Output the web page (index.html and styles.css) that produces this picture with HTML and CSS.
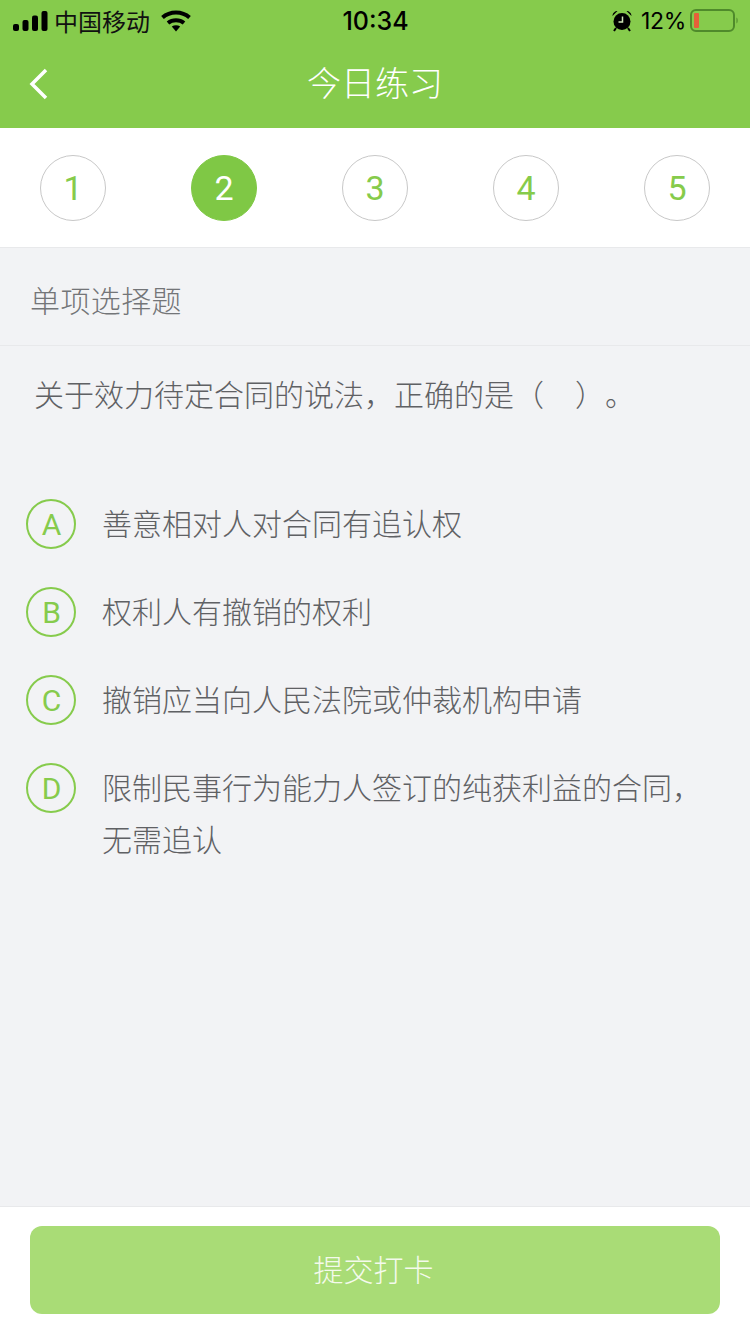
FILE: index.html
```html
<!DOCTYPE html>
<html lang="zh-CN">
<head>
<meta charset="utf-8">
<title>今日练习</title>
<link rel="stylesheet" href="styles.css">
</head>
<body>
<div class="page">
  <header class="header">
    <div class="status">
      <div class="status-left">
        <svg class="signal" width="36" height="20" viewBox="0 0 36 20"><rect x="0" y="13" width="6" height="7" rx="2"/><rect x="9.500" y="9" width="6" height="11" rx="2"/><rect x="19" y="4.500" width="6" height="15.500" rx="2"/><rect x="28.500" y="0" width="6" height="20" rx="2"/></svg>
        <span class="carrier">中国移动</span>
        <svg class="wifi" width="30" height="22" viewBox="0 0 30 22"><path d="M1.500 7.500C9 .8 21 .8 28.500 7.500" fill="none" stroke="#000" stroke-width="4"/><path d="M7 13C11.500 9.300 18.500 9.300 23 13" fill="none" stroke="#000" stroke-width="4"/><path d="M10.800 16.500C13.300 14.800 16.700 14.800 19.200 16.500L15 21.500Z"/></svg>
      </div>
      <div class="clock">10:34</div>
      <div class="status-right">
        <svg class="alarm" width="20" height="22" viewBox="0 0 20 22"><circle cx="10" cy="11.500" r="8.500"/><path d="M0.500 6C0.500 3 3 1 5.500 1ZM19.500 6C19.500 3 17 1 14.500 1Z"/><path d="M4 18L2 21M16 18L18 21" stroke="#000" stroke-width="2"/><path d="M10.500 6.500V12H6.500" fill="none" stroke="#cfe8b8" stroke-width="1.500"/></svg>
        <span class="percent">12%</span>
        <svg class="battery" width="49" height="24" viewBox="0 0 49 24"><rect x="1" y="1" width="43" height="21" rx="5" fill="none" stroke="#4f8a2b" stroke-width="2"/><rect x="4" y="4" width="5" height="15" rx="1" fill="#e5603a"/><path d="M46.500 8.500C48 9 48 14 46.500 14.500Z" fill="#4f8a2b"/></svg>
      </div>
    </div>
    <div class="nav">
      <svg class="back" width="22" height="34" viewBox="0 0 22 34"><path d="M18 3L4 17L18 31" fill="none" stroke="#fff" stroke-width="3.500"/></svg>
      <h1 class="title">今日练习</h1>
    </div>
  </header>

  <nav class="steps">
    <div class="step">1</div>
    <div class="step step-active">2</div>
    <div class="step">3</div>
    <div class="step">4</div>
    <div class="step">5</div>
  </nav>

  <main class="content">
    <div class="type">单项选择题</div>
    <p class="question">关于效力待定合同的说法，正确的是（<span class="blank"></span>）。</p>
    <ul class="options">
      <li class="option"><span class="letter">A</span><span class="option-text">善意相对人对合同有追认权</span></li>
      <li class="option"><span class="letter">B</span><span class="option-text">权利人有撤销的权利</span></li>
      <li class="option"><span class="letter">C</span><span class="option-text">撤销应当向人民法院或仲裁机构申请</span></li>
      <li class="option"><span class="letter">D</span><span class="option-text">限制民事行为能力人签订的纯获利益的合同，无需追认</span></li>
    </ul>
  </main>

  <footer class="footer">
    <button class="submit" type="button">提交打卡</button>
  </footer>
</div>
</body>
</html>
```
FILE: styles.css
```css
* { box-sizing: border-box; }
html, body { margin: 0; padding: 0; }
body {
  width: 750px;
  height: 1334px;
  overflow: hidden;
  background: #f2f3f5;
  font-family: "Noto Sans CJK SC", "Liberation Sans", sans-serif;
}
.page { display: flex; flex-direction: column; height: 1334px; }

.header { background: #86cb4c; height: 128px; flex: none; }
.status {
  height: 40px;
  padding: 1px 12px 0 13px;
  display: grid;
  grid-template-columns: 1fr auto 1fr;
  align-items: center;
  color: #000;
}
.status-left { display: flex; align-items: center; }
.signal { margin-right: 5px; }
.carrier { font-size: 24px; line-height: 40px; color: #111; }
.wifi { margin-left: 11px; }
.clock { font-family: Inter, "Liberation Sans", sans-serif; font-size: 25px; font-weight: 500; line-height: 40px; }
.status-right { display: flex; align-items: center; justify-content: flex-end; }
.alarm { margin-right: 9px; }
.percent { font-family: Inter, "Liberation Sans", sans-serif; font-size: 23px; line-height: 40px; margin-right: 4px; letter-spacing: -0.3px; }
.battery { margin-right: -1px; }

.nav { height: 88px; display: flex; align-items: center; justify-content: center; position: relative; }
.back { position: absolute; left: 28px; top: 27px; }
.title { margin: 0 0 5px; font-size: 34px; font-weight: 300; color: #fff; line-height: 83px; }

.steps {
  flex: none;
  height: 120px;
  background: #fff;
  border-bottom: 1px solid #e8e9eb;
  padding: 27px 40px 0;
  display: flex;
  justify-content: space-between;
  align-items: flex-start;
}
.step {
  width: 66px;
  height: 66px;
  border-radius: 50%;
  border: 1px solid #c8c8c8;
  color: #86cb4b;
  font-family: Roboto, "Liberation Sans", sans-serif;
  font-size: 34px;
  font-weight: 400;
  line-height: 64px;
  text-align: center;
}
.step-active { background: #7fc845; border-color: #7fc845; color: #fff; }

.content { flex: 1; min-height: 0; }
.type {
  height: 98px;
  padding-left: 30px;
  border-bottom: 1px solid #e8e9eb;
  font-size: 30px;
  font-weight: 300;
  letter-spacing: 0.4px;
  color: #737578;
  line-height: 103px;
}
.question {
  margin: 0;
  padding: 23px 30px 0 34px;
  height: 153px;
  font-size: 30px;
  font-weight: 300;
  color: #5f6164;
  line-height: 48px;
  white-space: pre;
  text-spacing-trim: space-all;
  font-kerning: none;
}
.blank { display: inline-block; width: 31px; }
.options { list-style: none; margin: 0; padding: 0 26px; }
.option { display: flex; align-items: flex-start; gap: 26px; margin-bottom: 38px; }
.letter {
  flex: none;
  width: 50px;
  height: 50px;
  padding-left: 1px;
  border: 2px solid #86cb4c;
  border-radius: 50%;
  color: #86cb4c;
  font-family: Roboto, "Liberation Sans", sans-serif;
  font-size: 30px;
  font-weight: 400;
  line-height: 48px;
  text-align: center;
}
.option-text {
  flex: 1;
  margin-top: -3px;
  font-size: 30px;
  font-weight: 300;
  color: #5f6164;
  line-height: 52px;
}

.footer {
  flex: none;
  height: 128px;
  background: #fff;
  border-top: 1px solid #e8e9eb;
  padding: 19px 30px 0;
}
.submit {
  display: block;
  width: 690px;
  height: 88px;
  padding: 0 3px 4px 0;
  border: 0;
  border-radius: 12px;
  background: #a9dc76;
  color: #f4faec;
  font-family: "Noto Sans CJK SC", sans-serif;
  font-size: 30px;
  font-weight: 300;
}
```
